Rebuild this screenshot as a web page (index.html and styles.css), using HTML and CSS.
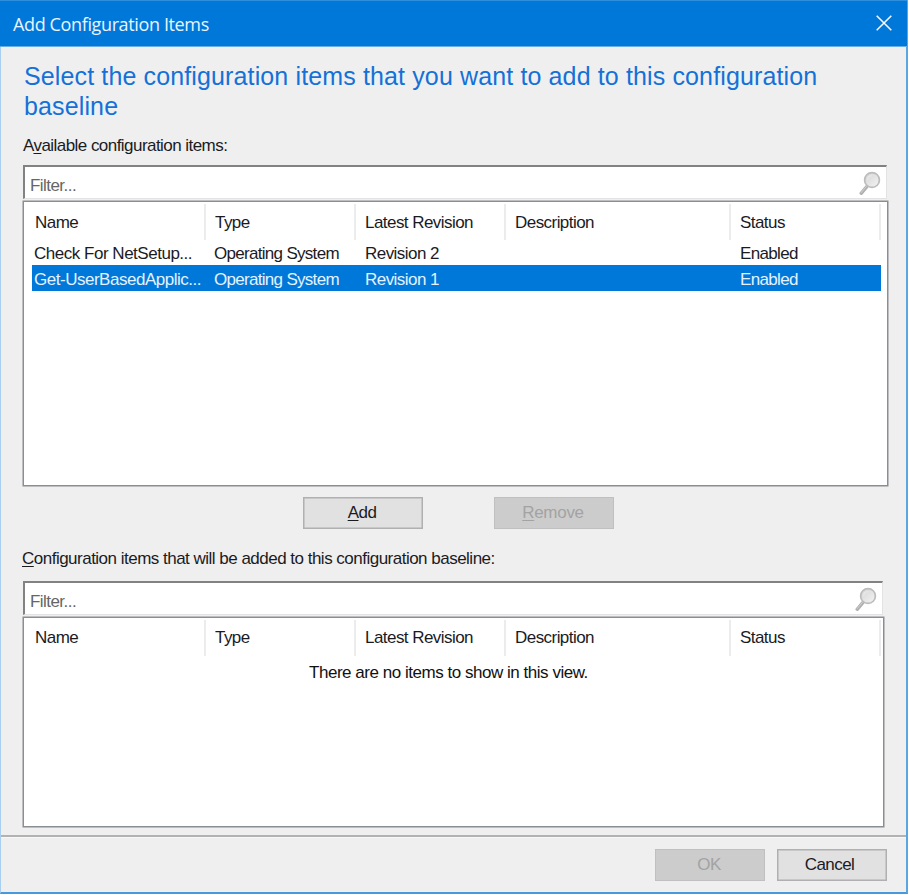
FILE: index.html
```
<!DOCTYPE html>
<html lang="en">
<head>
<meta charset="utf-8">
<title>Add Configuration Items</title>
<link rel="stylesheet" href="styles.css">
</head>
<body>
<svg class="defs" width="0" height="0" aria-hidden="true">
  <defs>
    <linearGradient id="lens" x1="0" y1="0" x2="1" y2="1">
      <stop offset="0" stop-color="#d4d4d4"/>
      <stop offset="1" stop-color="#f4f4f4"/>
    </linearGradient>
    <symbol id="search" viewBox="0 0 22 25">
      <path d="M7.8 15.6 2.2 22.3" stroke="#b0b0b0" stroke-width="3.4" stroke-linecap="round"/>
      <path d="M7.6 15.2 2.2 21.6" stroke="#d0d0d0" stroke-width="1" stroke-linecap="round"/>
      <circle cx="13" cy="9" r="7.4" fill="url(#lens)" stroke="#bcbcbc" stroke-width="1.7"/>
      <path d="M8.6 9A4.6 4.6 0 0 1 13 4.6" fill="none" stroke="#e9e9e9" stroke-width="1.2"/>
    </symbol>
  </defs>
</svg>
<div class="dialog">
  <header class="titlebar">
    <span class="title">Add Configuration Items</span>
    <svg class="close" width="16" height="16" viewBox="0 0 16 16"><path d="M.7.7 15.3 15.3M15.3.7.7 15.3" stroke="#fff" stroke-width="1.5"/></svg>
  </header>
  <main class="content">
    <h1>Select the configuration items that you want to add to this configuration<br>baseline</h1>
    <div class="label label-available">A<u>v</u>ailable configuration items:</div>
    <div class="filter"><span>Filter...</span><svg class="search" width="22" height="25"><use href="#search"/></svg></div>
    <div class="list list-available">
      <div class="row head"><div>Name</div><div>Type</div><div>Latest Revision</div><div>Description</div><div>Status</div></div>
      <div class="row"><div class="name">Check For NetSetup...</div><div class="os">Operating System</div><div>Revision 2</div><div></div><div class="state">Enabled</div></div>
      <div class="row selected"><div class="name">Get-UserBasedApplic...</div><div class="os">Operating System</div><div>Revision 1</div><div></div><div class="state">Enabled</div></div>
    </div>
    <div class="actions">
      <button class="btn"><span><u>A</u>dd</span></button>
      <button class="btn disabled remove"><span><u>R</u>emove</span></button>
    </div>
    <div class="label label-added"><u>C</u>onfiguration items that will be added to this configuration baseline:</div>
    <div class="filter filter-added"><span>Filter...</span><svg class="search" width="22" height="25"><use href="#search"/></svg></div>
    <div class="list list-added">
      <div class="row head"><div>Name</div><div>Type</div><div>Latest Revision</div><div>Description</div><div>Status</div></div>
      <div class="empty">There are no items to show in this view.</div>
    </div>
  </main>
  <footer class="footer">
    <button class="btn disabled ok"><span>OK</span></button>
    <button class="btn cancel"><span>Cancel</span></button>
  </footer>
</div>
</body>
</html>
```
FILE: styles.css
```
* { box-sizing: border-box; }
body {
  margin: 0;
  background: #fff;
  color: #1b1b1f;
  font: 17px/20px "Liberation Sans", Arial, sans-serif;
  letter-spacing: -0.55px;
}
.defs { position: absolute; }
.dialog {
  width: 908px;
  height: 894px;
  display: flex;
  flex-direction: column;
  background: #efefef;
  border-left: 1px solid #a9cff0;
  border-right: 2px solid #5aa5e2;
  border-bottom: 2px solid #4798dc;
}
.titlebar {
  height: 47px;
  margin: 0 -1px;
  padding: 0 15px 0 13px;
  display: flex;
  align-items: center;
  justify-content: space-between;
  background: #0078d9;
  border-top: 1px solid #2f8fdf;
  border-bottom: 1px solid #68ade6;
  color: #e8f4ff;
}
.title { font: 18px/24px "Open Sans", "Noto Sans", sans-serif; letter-spacing: -0.37px; }
.close { display: block; margin-top: -2px; }
.content { flex: 1; padding: 14px 0 0 22px; }
h1 {
  margin: 0 0 0 1px;
  font-size: 25px;
  line-height: 30px;
  font-weight: 400;
  letter-spacing: 0.13px;
  color: #1471d8;
  white-space: nowrap;
}
.label { height: 20px; white-space: nowrap; }
.label-available { margin-top: 15px; }
u { text-decoration: underline; text-decoration-thickness: 1px; text-underline-offset: 2px; }
.filter {
  width: 864px;
  height: 34px;
  margin-top: 9px;
  padding: 5px 5px 0 5px;
  display: flex;
  justify-content: space-between;
  background: #fff;
  border: 1px solid #e3e3e3;
  border-top: 2px solid #828282;
  border-left: 2px solid #828282;
  color: #666;
}
.filter span { padding-top: 4px; }
.search { margin-top: -1px; }
.list {
  margin-top: 2px;
  padding: 2px 6px 0 8px;
  background: #fff;
  border: 1px solid #898e93;
  box-shadow: 0 0 0 .5px #898e93;
}
.list-available { width: 865px; height: 285px; }
.row {
  width: 849px;
  height: 26px;
  display: grid;
  grid-template-columns: 174px 150px 150px 225px 150px;
  line-height: 29px;
  white-space: nowrap;
}
.row div { height: 26px; padding-left: 9px; }
.row div:first-child { padding-left: 3px; }
.row div.name { padding-left: 2px; letter-spacing: -0.48px; }
.row .name:first-child { padding-left: 2px; }
.row .os { padding-left: 8px; letter-spacing: -0.7px; }
.row .state { letter-spacing: -0.65px; }
.row.head { height: 35px; line-height: 37px; }
.row.head div { height: 36px; border-right: 2px solid #ececec; }
.selected { background: #0078d9; color: #e5f2fd; }
.actions { display: flex; margin: 11px 0 0 280px; gap: 71px; }
.btn {
  width: 120px;
  height: 32px;
  padding: 0;
  background: #e1e1e1;
  border: 1px solid #b0b0b0;
  box-shadow: inset 0 0 0 .5px #b0b0b0;
  color: #1b1b1f;
  font: inherit;
  letter-spacing: inherit;
}
.actions .btn span { margin-right: 2px; }
.disabled { background: #ccc; border-color: #c0c0c0; box-shadow: none; color: #a3a3a3; }
.remove { letter-spacing: -0.3px; }
.label-added { margin: 20px 0 0 -1px; letter-spacing: -0.51px; }
.filter-added { width: 860px; margin-top: 12px; }
.list-added { width: 861px; height: 210px; padding-right: 2px; }
.list-added .row.head { line-height: 35px; }
.empty { margin: 8px 0 0 277px; color: #111; letter-spacing: -0.47px; white-space: nowrap; }
.footer {
  height: 57px;
  padding: 12px 19px 0 0;
  display: flex;
  justify-content: flex-end;
  gap: 12px;
  border-top: 2px solid #b2b2b2;
  box-shadow: inset 0 1px #f8f8f8;
}
.footer .btn { width: 110px; height: 32px; }
.cancel span { margin-right: 5px; }
.ok span { margin-right: 2px; }
```
